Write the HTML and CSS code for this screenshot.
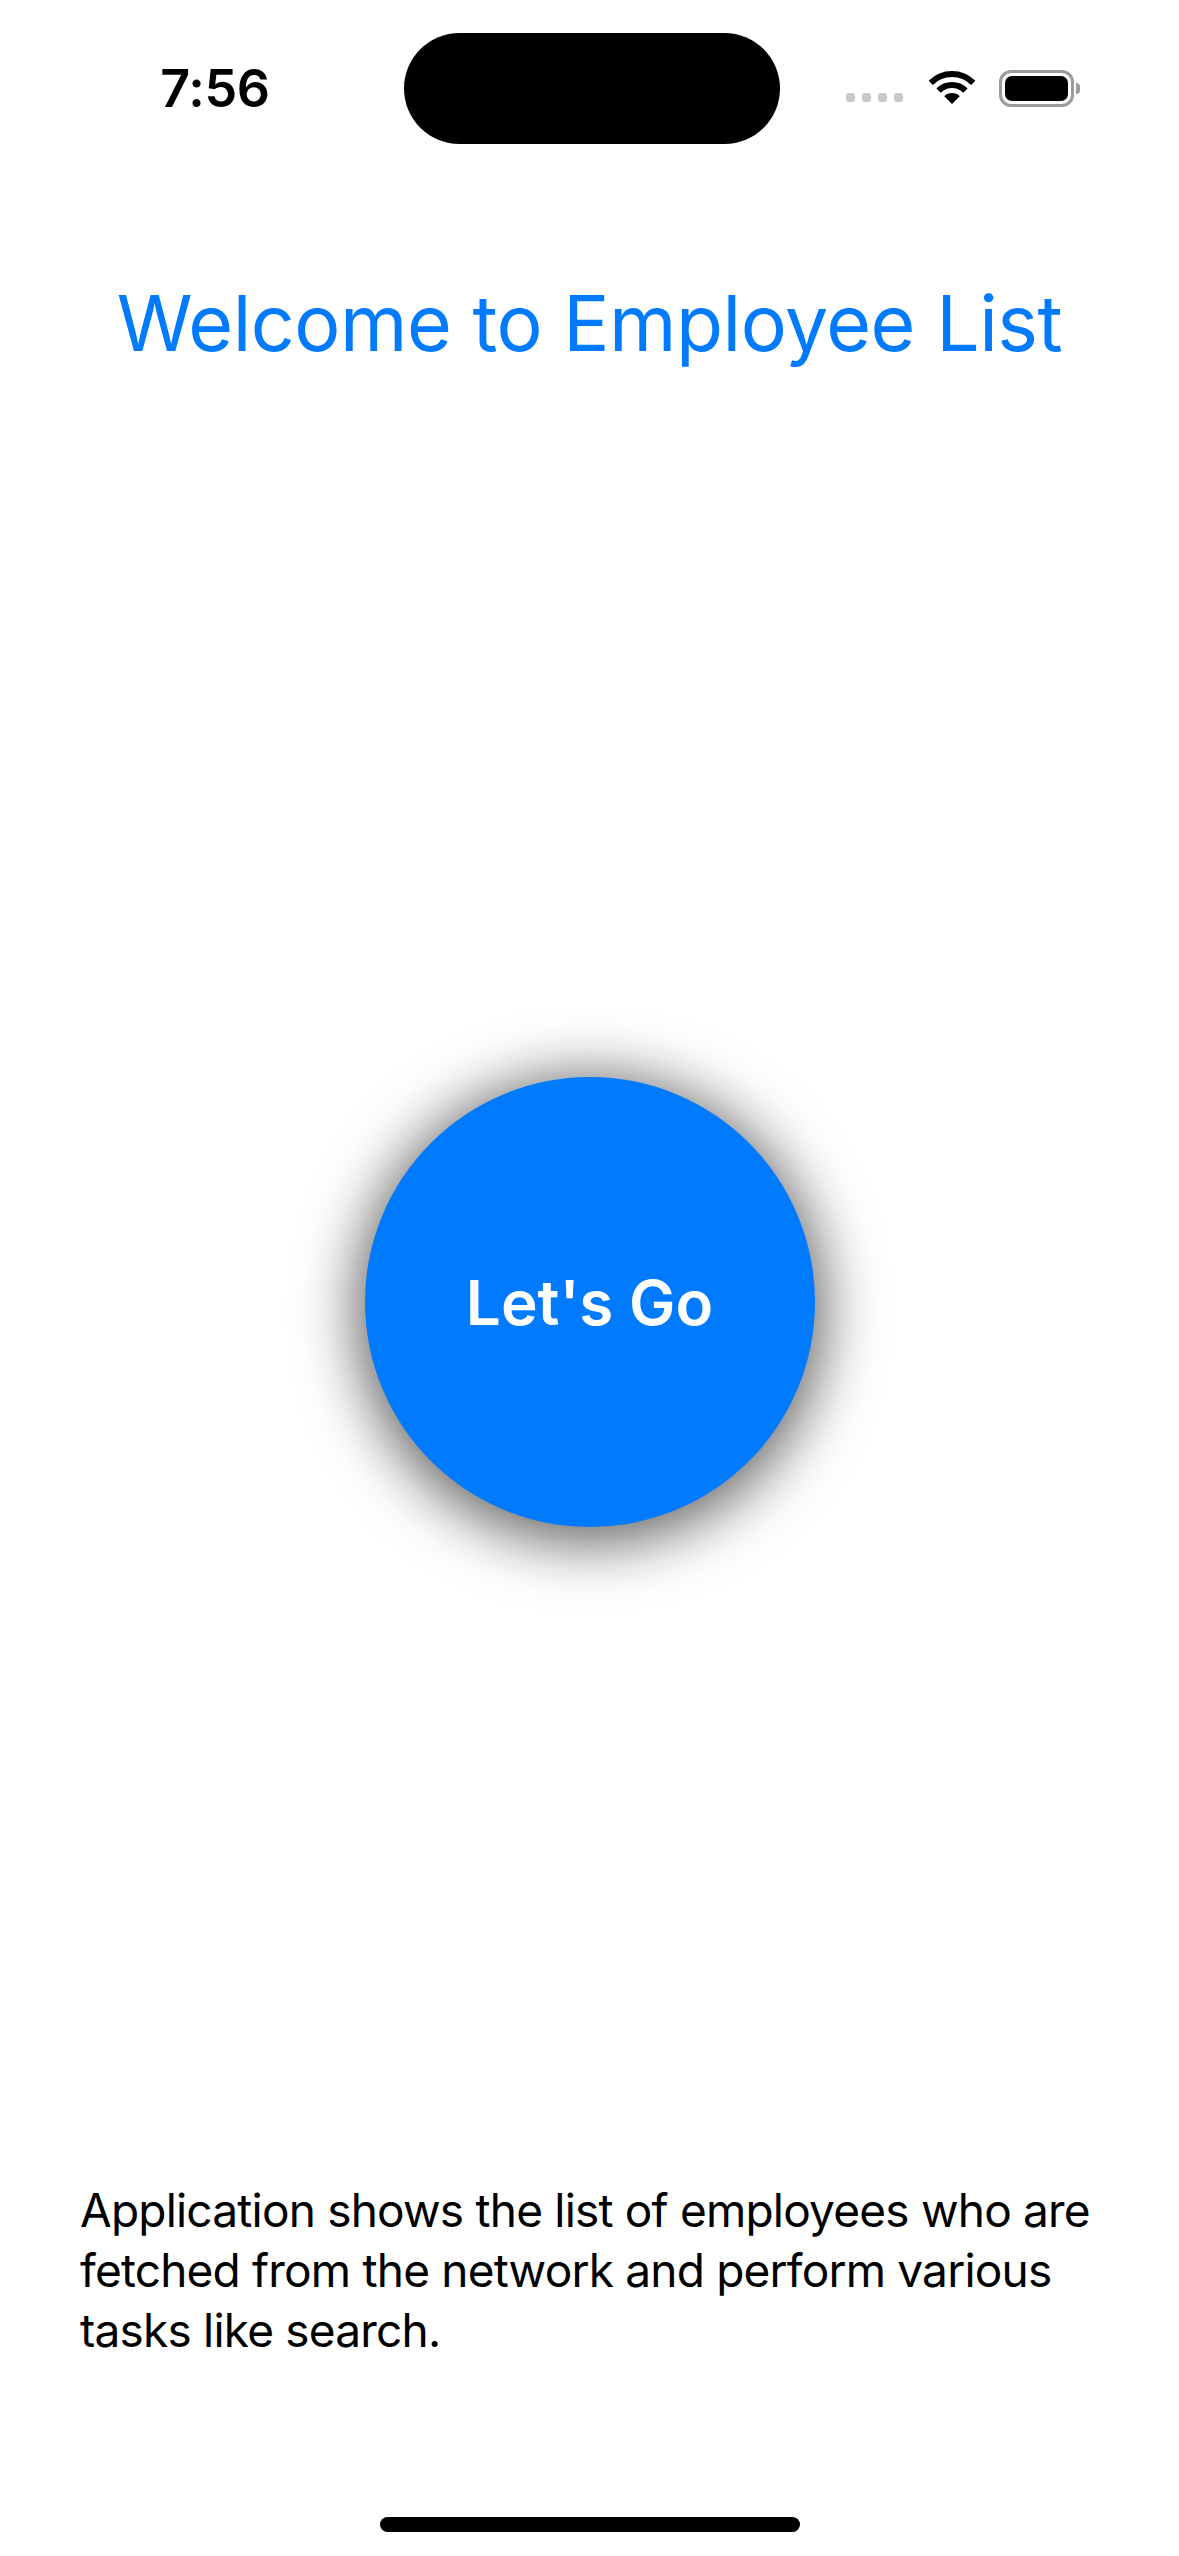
FILE: index.html
```html
<!DOCTYPE html>
<html lang="en">
<head>
<meta charset="utf-8">
<title>Employee List</title>
<link rel="stylesheet" href="styles.css">
</head>
<body>
<div class="screen">
  <header class="status">
    <div class="status-left"><span class="time">7:56</span></div>
    <div class="island"></div>
    <div class="status-right">
      <div class="signal"><span></span><span></span><span></span><span></span></div>
      <svg class="wifi" width="50" height="34" viewBox="0 0 50 34">
        <path d="M3.79 11.79 A30 30 0 0 1 46.21 11.79" fill="none" stroke="#000" stroke-width="6"/>
        <path d="M11.57 19.57 A19 19 0 0 1 38.43 19.57" fill="none" stroke="#000" stroke-width="6"/>
        <path d="M25 33 L17.22 25.22 A11 11 0 0 1 32.78 25.22 Z" fill="#000"/>
      </svg>
      <div class="battery"><div class="battery-body"><div class="battery-fill"></div></div><div class="battery-cap"></div></div>
    </div>
  </header>

  <h1 class="title">Welcome to Employee List</h1>

  <div class="hero"><button class="go">Let's Go</button></div>

  <p class="desc">Application shows the list of employees who are<br>fetched from the network and perform various<br>tasks like search.</p>

  <div class="home-bar"></div>
</div>
</body>
</html>
```

FILE: styles.css
```css
html, body {
  margin: 0;
  padding: 0;
  background: #ffffff;
}

.screen {
  width: 1179px;
  height: 2556px;
  display: flex;
  flex-direction: column;
  font-family: "Inter", "Noto Sans", sans-serif;
  color: #000;
  overflow: hidden;
}

/* status bar */
.status {
  display: flex;
  align-items: center;
  padding-top: 33px;
  height: 111px;
}
.status-left {
  width: 404px;
  box-sizing: border-box;
  padding-left: 26px;
  display: flex;
  justify-content: center;
}
.time {
  font-size: 52px;
  font-weight: 600;
  letter-spacing: -0.3px;
  line-height: 1;
}
.island {
  width: 376px;
  height: 111px;
  border-radius: 56px;
  background: #000;
}
.status-right {
  flex: 1;
  box-sizing: border-box;
  padding-left: 66px;
  display: flex;
  align-items: center;
}
.signal {
  display: flex;
  gap: 7px;
  margin-top: 17px;
}
.signal span {
  width: 9px;
  height: 9px;
  border-radius: 3px;
  background: #c8c8c8;
}
.wifi {
  display: block;
  margin-left: 24px;
  margin-top: -2px;
}
.battery {
  display: flex;
  align-items: center;
  margin-left: 22px;
}
.battery-body {
  width: 75px;
  height: 37px;
  box-sizing: border-box;
  border: 3px solid #9c9c9c;
  border-radius: 12px;
  padding: 3px;
}
.battery-fill {
  width: 100%;
  height: 100%;
  background: #000;
  border-radius: 7px;
}
.battery-cap {
  width: 4px;
  height: 11px;
  margin-left: 2px;
  background: #9c9c9c;
  border-radius: 0 4px 4px 0;
}

/* title */
.title {
  margin: 141px 0 0;
  text-align: center;
  font-size: 77px;
  font-weight: 400;
  line-height: 77px;
  color: #007aff;
  letter-spacing: -0.5px;
}

/* button */
.hero {
  margin-top: 715px;
  display: flex;
  justify-content: center;
}
.go {
  width: 450px;
  height: 450px;
  border: none;
  border-radius: 50%;
  background: #007aff;
  color: #fff;
  font-family: "Inter", "Noto Sans", sans-serif;
  font-size: 62px;
  font-weight: 600;
  padding: 0;
  box-shadow: 0 8px 60px 8px rgba(0, 0, 0, 0.62);
}

/* description */
.desc {
  margin: 653px 0 0;
  padding-left: 80px;
  font-size: 46px;
  line-height: 60px;
  letter-spacing: -0.8px;
  white-space: nowrap;
}

/* home indicator */
.home-bar {
  margin: 157px auto 0;
  width: 420px;
  height: 15px;
  border-radius: 8px;
  background: #000;
}
```
